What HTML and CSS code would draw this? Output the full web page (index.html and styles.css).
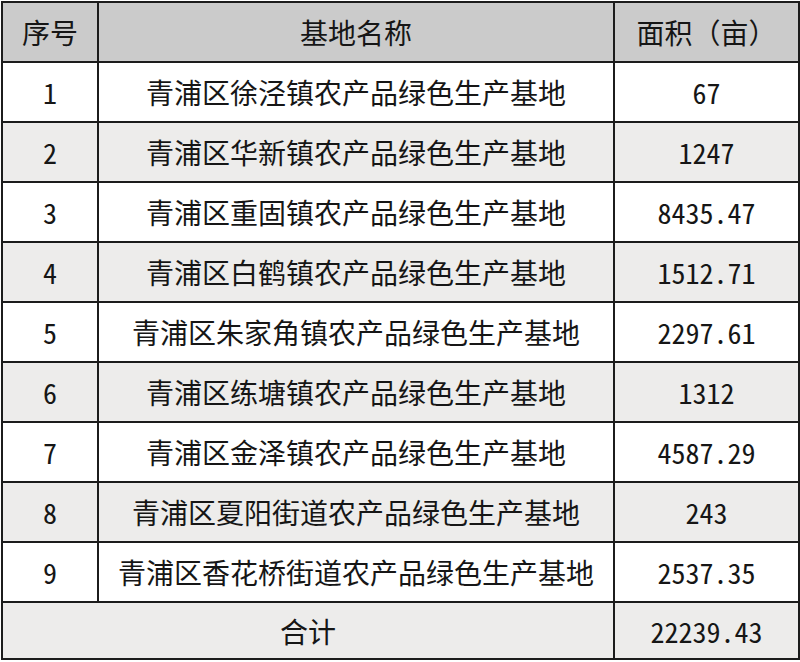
FILE: index.html
```html
<!DOCTYPE html>
<html lang="zh-CN">
<head>
<meta charset="utf-8">
<title>基地面积</title>
<link rel="stylesheet" href="styles.css">
</head>
<body>
<table class="grid">
  <colgroup>
    <col class="c-no">
    <col class="c-name">
    <col class="c-area">
  </colgroup>
  <thead>
    <tr class="head"><th>序号</th><th>基地名称</th><th>面积（亩）</th></tr>
  </thead>
  <tbody>
    <tr><td>1</td><td>青浦区徐泾镇农产品绿色生产基地</td><td class="num">67</td></tr>
    <tr class="alt"><td>2</td><td>青浦区华新镇农产品绿色生产基地</td><td class="num">1247</td></tr>
    <tr><td>3</td><td>青浦区重固镇农产品绿色生产基地</td><td class="num">8435.47</td></tr>
    <tr class="alt"><td>4</td><td>青浦区白鹤镇农产品绿色生产基地</td><td class="num">1512.71</td></tr>
    <tr><td>5</td><td>青浦区朱家角镇农产品绿色生产基地</td><td class="num">2297.61</td></tr>
    <tr class="alt"><td>6</td><td>青浦区练塘镇农产品绿色生产基地</td><td class="num">1312</td></tr>
    <tr><td>7</td><td>青浦区金泽镇农产品绿色生产基地</td><td class="num">4587.29</td></tr>
    <tr class="alt"><td>8</td><td>青浦区夏阳街道农产品绿色生产基地</td><td class="num">243</td></tr>
    <tr><td>9</td><td>青浦区香花桥街道农产品绿色生产基地</td><td class="num">2537.35</td></tr>
    <tr class="alt total"><td colspan="2">合计</td><td class="num">22239.43</td></tr>
  </tbody>
</table>
</body>
</html>
```
FILE: styles.css
```css
html, body {
  margin: 0;
  padding: 0;
  background: #ffffff;
}
body {
  padding: 1px 0 0 1px;
}
.grid {
  border-collapse: collapse;
  width: 797px;
  table-layout: fixed;
  font-family: "Noto Sans Mono CJK SC", "Noto Sans CJK SC", sans-serif;
  font-size: 28px;
  color: #161616;
}
.c-no { width: 96px; }
.c-name { width: 516px; }
.c-area { width: 185px; }
.grid th, .grid td {
  border: 2px solid #1c1c1c;
  height: 58px;
  padding: 0;
  text-align: center;
  vertical-align: middle;
  font-weight: normal;
  line-height: 30px;
}
.head th {
  background: #cbcbcb;
}
.alt td {
  background: #edeceb;
}
.total td {
  height: 55px;
}
```
